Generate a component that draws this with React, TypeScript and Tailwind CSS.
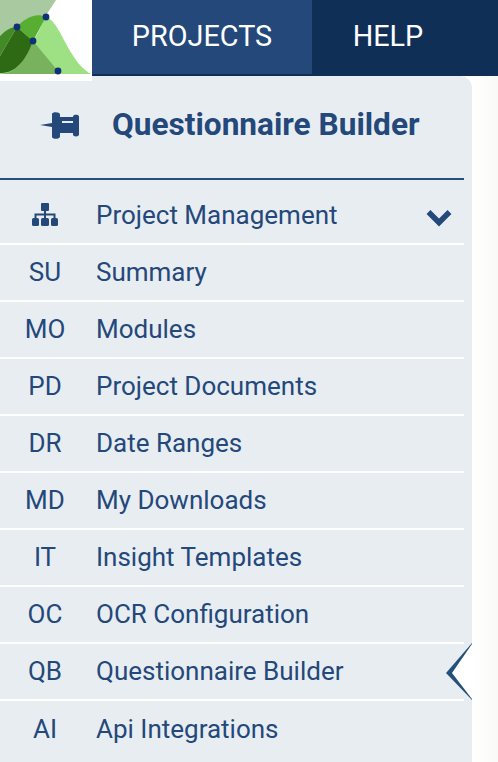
const items = [
  { code: "SU", label: "Summary" },
  { code: "MO", label: "Modules" },
  { code: "PD", label: "Project Documents" },
  { code: "DR", label: "Date Ranges" },
  { code: "MD", label: "My Downloads" },
  { code: "IT", label: "Insight Templates" },
  { code: "OC", label: "OCR Configuration" },
  { code: "QB", label: "Questionnaire Builder" },
  { code: "AI", label: "Api Integrations" },
];

function Logo() {
  return (
    <svg className="block" width="92" height="76" viewBox="0 0 92 76">
      <rect width="92" height="80" fill="#fff" />
      <path d="M0 0H56L45 17L17 27L0 36Z" fill="#a9c9a0" />
      <path d="M33 41C41 30 44 17 46 17C56 20 62 38 72 54C78 64 84 70 91 74H0V73Z" fill="#9ee184" />
      <path d="M33 41L17 27C25 18 36 12 46 17Z" fill="#58ae32" />
      <path d="M33 41L58 71L60 74H0C16 74 27 58 33 41Z" fill="#78b25c" />
      <path d="M0 36C6 30 11 27 17 27L0 56Z" fill="#418a26" />
      <path d="M17 27L33 41C27 58 16 74 0 73V56Z" fill="#2e6a14" />
      <circle cx="17" cy="27" r="3.4" fill="#10307a" />
      <circle cx="46" cy="17" r="3.4" fill="#10307a" />
      <circle cx="33" cy="41" r="3.4" fill="#10307a" />
      <circle cx="58" cy="71" r="3.4" fill="#10307a" />
    </svg>
  );
}

function PinIcon() {
  return (
    <svg width="39" height="27" viewBox="0 0 39 27" fill="#24487a">
      <path d="M0 13L12 11V2C12 -0.5 20 -0.5 20 2.5V5H33V4.5C33 2 39 2 39 4.5V22.5C39 25 33 25 33 22.5V21H20V24.5C20 27.5 12 27.5 12 25V15Z" />
      <rect x="22" y="9" width="11" height="2" fill="#e8edf2" />
    </svg>
  );
}

function SitemapIcon() {
  return (
    <svg width="26" height="23" viewBox="0 0 26 23" fill="#24487a">
      <rect x="9" y="0" width="8" height="8" rx="1" />
      <rect x="0" y="15" width="7" height="8" rx="1.5" />
      <rect x="9" y="15" width="8" height="8" rx="1.5" />
      <rect x="19" y="15" width="7" height="8" rx="1.5" />
      <path d="M12 7h2v3.5h9.5V16h-2v-3.5H14V16h-2v-3.5H4.5V16h-2v-5.5H12z" />
    </svg>
  );
}

export default function App() {
  return (
    <div className="relative h-[762px] w-[498px] overflow-hidden bg-white font-['Roboto',sans-serif]">
      {/* Top nav */}
      <header className="flex h-[76px] bg-[#0f2f56]">
        <div className="relative z-10 h-[81px] w-[92px] bg-white">
          <Logo />
        </div>
        <div className="flex h-[74px] w-[220px] items-center justify-center bg-[#24487a] text-[28.8px] text-white">PROJECTS</div>
        <div className="flex h-[74px] w-[152px] items-center justify-center text-[28.8px] text-white">HELP</div>
      </header>

      <div className="flex">
        {/* Sidebar */}
        <aside className="relative w-[472px] rounded-tr-[12px] bg-[#e8edf2] pr-2 text-[#24487a]">
          <div className="flex h-[104px] items-center border-b-2 border-[#24507a] pb-1 pl-[40px]">
            <PinIcon />
            <span className="ml-[33px] text-[31.6px] font-bold">Questionnaire Builder</span>
          </div>

          <div className="relative flex h-[65px] items-center border-b-2 border-white pt-2">
            <span className="mb-[2px] flex w-[90px] justify-center"><SitemapIcon /></span>
            <span className="ml-[6px] text-[26px]">Project Management</span>
            <svg className="absolute right-[12px] top-[29px]" width="26" height="18" viewBox="0 0 26 18" fill="none" stroke="#24487a" strokeWidth="5.5">
              <path d="M2.5 3L13 13.5L23.5 3" />
            </svg>
          </div>

          {items.map((item, i) => (
            <div
              key={item.code}
              className={`flex h-[57px] items-center text-[26px] ${i < items.length - 1 ? "border-b-2 border-white" : ""}`}
            >
              <span className="w-[90px] text-center">{item.code}</span>
              <span className="ml-[6px]">{item.label}</span>
            </div>
          ))}

          {/* Active marker */}
          <svg className="absolute left-[446px] top-[567px]" width="26" height="57" viewBox="0 0 26 57">
            <path d="M26 0L0 30L26 57Z" fill="#24507a" />
            <path d="M26 1L6 30L26 56Z" fill="#fff" />
          </svg>
        </aside>

        <div className="h-[686px] flex-1 bg-gradient-to-r from-white to-[#faf9f8]" />
      </div>
    </div>
  );
}
